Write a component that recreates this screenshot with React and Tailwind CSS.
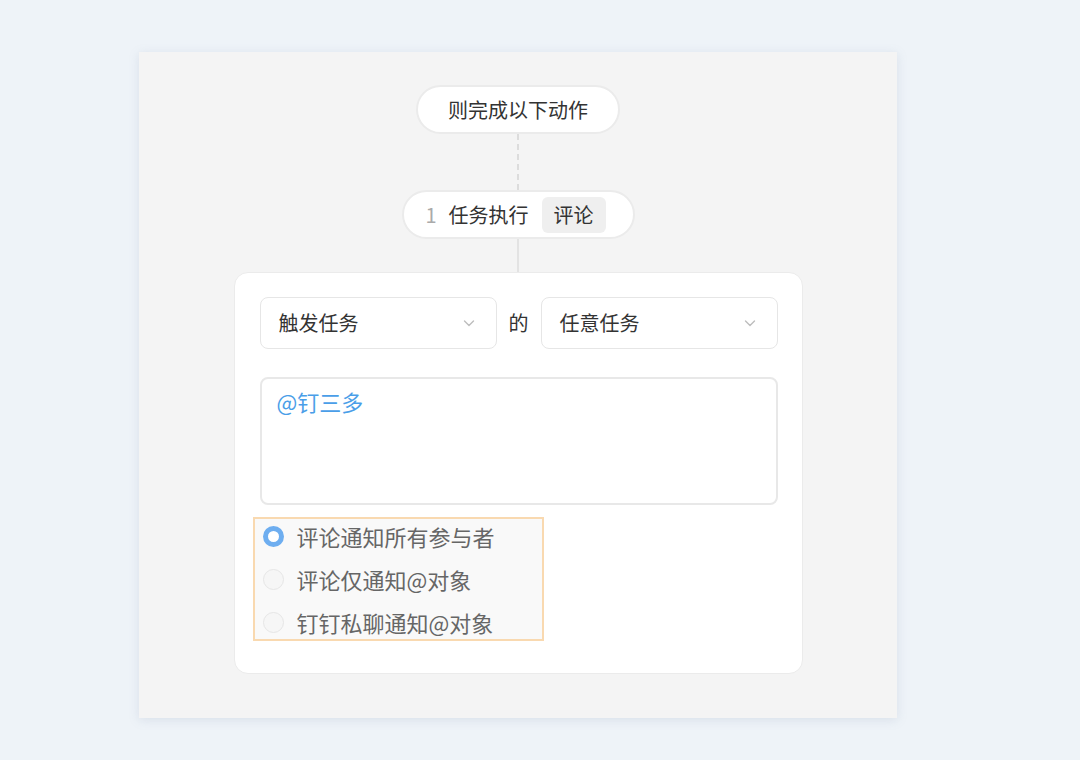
const font = { fontFamily: '"Noto Sans CJK SC", "Noto Sans", sans-serif' };

function Chevron() {
  return (
    <svg width="14" height="14" viewBox="0 0 14 14" fill="none" className="text-[#bdbdbd]">
      <path d="M2.5 5l4.5 4.5L11.5 5" stroke="currentColor" strokeWidth="1.4" strokeLinecap="round" strokeLinejoin="round" />
    </svg>
  );
}

function Select({ label }) {
  return (
    <div className="flex h-[52px] w-[237px] items-center justify-between rounded-[8px] border border-[#e6e6e6] bg-white pl-[18px] pr-[20px]">
      <span className="text-[20px] text-[#333]">{label}</span>
      <Chevron />
    </div>
  );
}

function Radio({ checked, label }) {
  return (
    <div className="flex h-[34px] items-center gap-[13px] pl-[8px]">
      {checked ? (
        <span className="h-[21px] w-[21px] rounded-full border-[5px] border-[#6eaef0] bg-white" />
      ) : (
        <span className="h-[21px] w-[21px] rounded-full border border-[#e6e6e6] bg-[#f6f6f6]" />
      )}
      <span className="text-[22px] text-[#666]">{label}</span>
    </div>
  );
}

export default function App() {
  return (
    <div className="min-h-[760px] w-[1080px] bg-[#eef3f8] pt-[52px] pl-[139px]" style={font}>
      <div className="flex h-[666px] w-[758px] flex-col items-center bg-[#f4f4f4] pt-[33px] shadow-[0_2px_10px_rgba(120,140,170,0.18)]">
        <div className="flex h-[49px] w-[204px] items-center justify-center rounded-full border-2 border-[#ebebeb] bg-white text-[20px] text-[#333]">
          则完成以下动作
        </div>
        <div className="h-[56px] border-l-2 border-dashed border-[#dcdcdc]" />
        <div className="flex h-[49px] w-[233px] items-center rounded-full border-2 border-[#ebebeb] bg-white pl-[22px] text-[20px]">
          <span className="text-[#aaa]">1</span>
          <span className="ml-[12px] text-[#333]">任务执行</span>
          <span className="ml-[13px] flex h-[36px] items-center rounded-[6px] bg-[#efefef] px-[12px] text-[#333]">评论</span>
        </div>
        <div className="h-[33px] border-l-2 border-[#e3e3e3]" />
        <div className="flex h-[402px] w-[569px] flex-col rounded-[14px] border border-[#ebebeb] bg-white pl-[25px] pr-[24px] pt-[24px]">
          <div className="flex items-center justify-between">
            <Select label="触发任务" />
            <span className="text-[20px] text-[#333]">的</span>
            <Select label="任意任务" />
          </div>
          <div className="mt-[28px] h-[128px] w-[518px] rounded-[8px] border-2 border-[#e8e8e8] bg-white px-[15px] pt-[6px] text-[22px] text-[#4a9ee8]">
            @钉三多
          </div>
          <div className="mt-[12px] -ml-[7px] flex w-[291px] flex-col gap-[9px] border-2 border-[#f9d9b0] bg-[#f9f9f9]">
            <Radio checked label="评论通知所有参与者" />
            <Radio label="评论仅通知@对象" />
            <Radio label="钉钉私聊通知@对象" />
          </div>
        </div>
      </div>
    </div>
  );
}
